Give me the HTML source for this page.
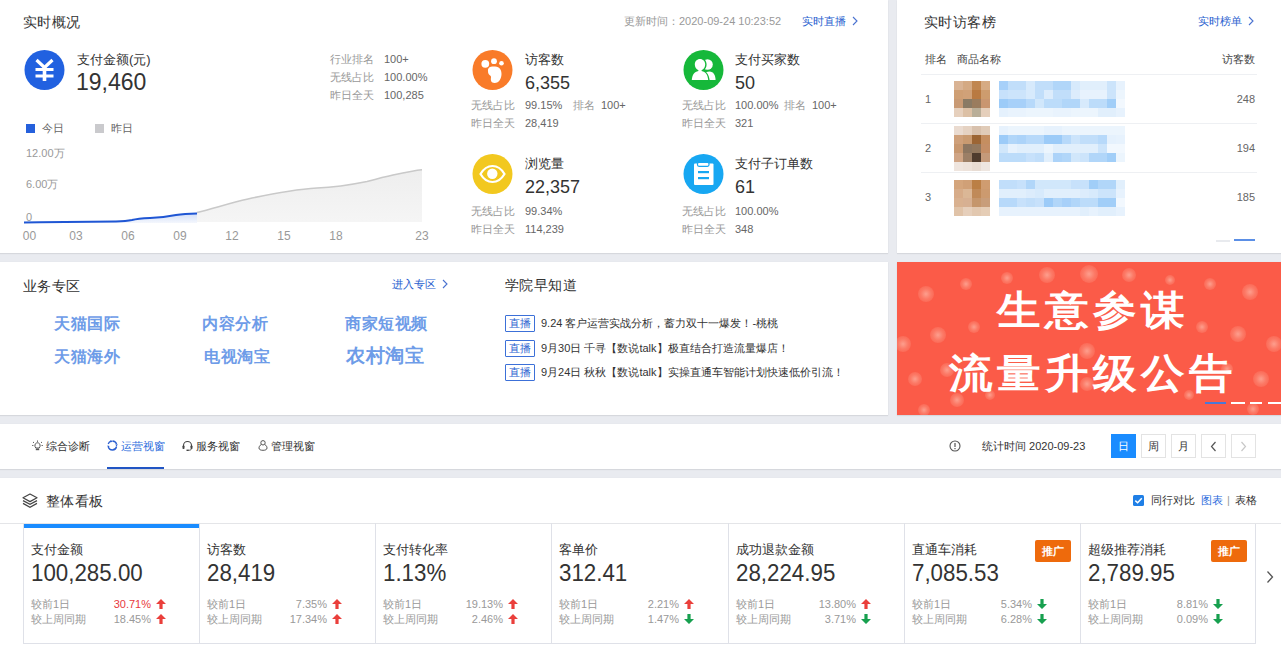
<!DOCTYPE html>
<html><head><meta charset="utf-8">
<style>
*{margin:0;padding:0;box-sizing:border-box}
html,body{width:1281px;height:652px;overflow:hidden;background:#e9ebf0;font-family:"Liberation Sans",sans-serif;color:#333}
.p{position:absolute;background:#fff;box-shadow:0 1px 1px rgba(0,0,0,0.07),0 0 1px rgba(0,0,0,0.06)}
.a{position:absolute;white-space:nowrap}
.t14{font-size:14px;line-height:16px;color:#333;letter-spacing:0.4px}
.g{color:#999}
.s12{font-size:12px;line-height:14px}
.s11{font-size:11px;line-height:14px}
.blue{color:#2a5fcf}
.circle{position:absolute;width:41px;height:41px;border-radius:50%}
.biz{font-size:16px;line-height:18px;font-weight:bold;color:#6e9ce8;letter-spacing:0.5px}
.tag{width:30px;height:17px;border:1px solid #3c70d8;color:#2b62d0;font-size:11px;line-height:14px;text-align:center;border-radius:1px}
.btn{width:25px;height:24px;border:1px solid #e3e3e3;font-size:11px;line-height:22px;text-align:center;color:#333;background:#fff}
.card{position:absolute;top:45px;width:177px;height:121px;border:1px solid #e3e5ea}
.badge{width:36px;height:22px;background:#ee6a0c;color:#fff;font-size:11px;line-height:22px;text-align:center;border-radius:2px;font-weight:bold}
.num{font-size:24px;line-height:26px;color:#333;transform:scaleX(0.93);transform-origin:0 0}
</style></head><body>

<!-- Panel 1 -->
<div class="p" style="left:0;top:0;width:888px;height:253px">
  <div class="a t14" style="left:23px;top:14px">实时概况</div>
  <svg class="a" style="left:24px;top:50px" width="41" height="41" viewBox="0 0 41 41">
<circle cx="20.5" cy="20" r="20" fill="#2161e0"/>
<path d="M12.5,10 L20.5,17.5 L28.5,10" fill="none" stroke="#fff" stroke-width="3.2"/>
<rect x="11.5" y="18" width="18" height="3" fill="#fff"/>
<rect x="11.5" y="24.5" width="18" height="3" fill="#fff"/>
<rect x="18.7" y="16" width="3.6" height="15" fill="#fff"/>
</svg>
  <div class="a" style="left:77px;top:52px;font-size:13px;line-height:16px">支付金额(元)</div>
  <div class="a" style="left:76px;top:69px;font-size:23px;line-height:26px">19,460</div>
  <div class="a s11 g" style="left:330px;top:52px">行业排名</div><div class="a s11" style="left:384px;top:52px;color:#666">100+</div>
  <div class="a s11 g" style="left:330px;top:70px">无线占比</div><div class="a s11" style="left:384px;top:70px;color:#666">100.00%</div>
  <div class="a s11 g" style="left:330px;top:88px">昨日全天</div><div class="a s11" style="left:384px;top:88px;color:#666">100,285</div>

  <div class="a" style="left:26px;top:124px;width:9px;height:9px;background:#2560dc"></div>
  <div class="a s11" style="left:42px;top:121px;color:#666">今日</div>
  <div class="a" style="left:95px;top:124px;width:9px;height:9px;background:#cacacd"></div>
  <div class="a s11" style="left:111px;top:121px;color:#666">昨日</div>

  <div class="a s11 g" style="left:26px;top:146px">12.00万</div>
  <div class="a s11 g" style="left:26px;top:177px">6.00万</div>
  <div class="a s11 g" style="left:26px;top:210px">0</div>
  <div class="a g" style="left:14.5px;width:30px;text-align:center;top:229px;font-size:12px;line-height:14px">00</div>
  <div class="a g" style="left:61px;width:30px;text-align:center;top:229px;font-size:12px;line-height:14px">03</div>
  <div class="a g" style="left:113px;width:30px;text-align:center;top:229px;font-size:12px;line-height:14px">06</div>
  <div class="a g" style="left:165px;width:30px;text-align:center;top:229px;font-size:12px;line-height:14px">09</div>
  <div class="a g" style="left:217px;width:30px;text-align:center;top:229px;font-size:12px;line-height:14px">12</div>
  <div class="a g" style="left:269px;width:30px;text-align:center;top:229px;font-size:12px;line-height:14px">15</div>
  <div class="a g" style="left:321px;width:30px;text-align:center;top:229px;font-size:12px;line-height:14px">18</div>
  <div class="a g" style="left:407px;width:30px;text-align:center;top:229px;font-size:12px;line-height:14px">23</div>
  <svg class="a" style="left:0;top:0" width="440" height="253">
    <defs>
      <linearGradient id="gf" x1="0" y1="0" x2="0" y2="1"><stop offset="0" stop-color="#eeeeee"/><stop offset="1" stop-color="#f5f5f5"/></linearGradient>
      <linearGradient id="bf" x1="0" y1="0" x2="0" y2="1"><stop offset="0" stop-color="#d2def8"/><stop offset="1" stop-color="#f4f7fd"/></linearGradient>
    </defs>
    <path d="M24,222 C60,221.5 100,221 116,220.5 C125,220.2 130,219 138,218.3 C150,217.5 160,217.5 168,216 C176,214.5 182,213.5 197,212.5 C215,208 230,203 248,199 C275,193 300,189 317,188 C330,187.5 345,186 367,181.5 C380,178 386,176.5 393,175 C405,172.5 415,170.5 422,169.8 L422,222 Z" fill="url(#gf)"/>
    <path d="M197,212.5 C215,208 230,203 248,199 C275,193 300,189 317,188 C330,187.5 345,186 367,181.5 C380,178 386,176.5 393,175 C405,172.5 415,170.5 422,169.8" fill="none" stroke="#c9c9c9" stroke-width="1.6"/>
    <path d="M24,222.5 C60,222 100,221.6 116,221.4 C124,221.2 128,220.8 132,220 C136,219 140,218.5 150,218 C160,217.5 168,216.5 176,215 C182,213.8 188,213.4 197,213.4 L197,223 L24,223 Z" fill="url(#bf)"/>
    <path d="M24,222.5 C60,222 100,221.6 116,221.4 C124,221.2 128,220.8 132,220 C136,219 140,218.5 150,218 C160,217.5 168,216.5 176,215 C182,213.8 188,213.4 197,213.4" fill="none" stroke="#1f56d4" stroke-width="2"/>
  </svg>

  <div class="a s11 g" style="left:624px;top:14px">更新时间：2020-09-24 10:23:52</div>
  <div class="a s11 blue" style="left:802px;top:14px">实时直播</div><svg class="a" style="left:852px;top:16px" width="6" height="10"><path d="M1,1 L5,5 L1,9" fill="none" stroke="#4a72d0" stroke-width="1.1"/></svg>

  <svg class="a" style="left:472px;top:50px" width="41" height="41" viewBox="0 0 41 41">
<circle cx="20.5" cy="20" r="20" fill="#f97b29"/>
<circle cx="13.3" cy="13.8" r="3.9" fill="#fff"/>
<circle cx="22" cy="11.2" r="2.9" fill="#fff"/>
<circle cx="29.5" cy="13.3" r="2.3" fill="#fff"/>
<path d="M16,21 C15.5,17 19,16 23,16.5 C28,17 29.5,20 29.5,24 C29.5,28 27.5,33 22.5,33 C19,33 18.5,30 19,27.5 C19.3,26 18,25.5 17,24.5 C16.3,23.6 16,22.5 16,21 Z" fill="#fff"/>
</svg>
  <div class="a" style="left:525px;top:52px;font-size:13px;line-height:16px">访客数</div>
  <div class="a" style="left:525px;top:73px;font-size:18px;line-height:20px">6,355</div>
  <div class="a s11 g" style="left:471px;top:98px">无线占比</div><div class="a s11" style="left:525px;top:98px;color:#666">99.15%</div>
  <div class="a s11 g" style="left:573px;top:98px">排名</div><div class="a s11" style="left:601px;top:98px;color:#666">100+</div>
  <div class="a s11 g" style="left:471px;top:116px">昨日全天</div><div class="a s11" style="left:525px;top:116px;color:#666">28,419</div>

  <svg class="a" style="left:683px;top:50px" width="41" height="41" viewBox="0 0 41 41">
<circle cx="20.5" cy="20" r="20" fill="#16b83a"/>
<circle cx="24.5" cy="14.5" r="5.3" fill="#fff"/>
<path d="M19,30 C19.5,24.5 22,21.5 26.5,21.5 C30.5,21.5 32.3,25 32.6,30 Z" fill="#fff"/>
<path d="M17,7.6 C20.8,7.6 23.6,10.6 23.6,14.4 C23.6,17.2 22.2,19.4 20.2,20.6 C24,21.8 26.2,25 26.8,31.4 L7.2,31.4 C7.8,25 10,21.8 13.8,20.6 C11.8,19.4 10.4,17.2 10.4,14.4 C10.4,10.6 13.2,7.6 17,7.6 Z" fill="#16b83a"/>
<path d="M17,9 C20,9 22.2,11.4 22.2,14.4 C22.2,17 20.8,19 18.6,20.2 L18.6,21 C22.6,21.8 24.8,24.8 25.2,30 L8.8,30 C9.2,24.8 11.4,21.8 15.4,21 L15.4,20.2 C13.2,19 11.8,17 11.8,14.4 C11.8,11.4 14,9 17,9 Z" fill="#fff"/>
</svg>
  <div class="a" style="left:735px;top:52px;font-size:13px;line-height:16px">支付买家数</div>
  <div class="a" style="left:735px;top:73px;font-size:18px;line-height:20px">50</div>
  <div class="a s11 g" style="left:682px;top:98px">无线占比</div><div class="a s11" style="left:735px;top:98px;color:#666">100.00%</div>
  <div class="a s11 g" style="left:784px;top:98px">排名</div><div class="a s11" style="left:812px;top:98px;color:#666">100+</div>
  <div class="a s11 g" style="left:682px;top:116px">昨日全天</div><div class="a s11" style="left:735px;top:116px;color:#666">321</div>

  <svg class="a" style="left:472px;top:154px" width="41" height="41" viewBox="0 0 41 41">
<circle cx="20.5" cy="20" r="20" fill="#f2c81f"/>
<path d="M8.5,20 C12,14 16,12 20.5,12 C25,12 29,14 32.5,20 C29,26 25,28 20.5,28 C16,28 12,26 8.5,20 Z" fill="none" stroke="#fff" stroke-width="2.2"/>
<circle cx="20.3" cy="19.8" r="5.2" fill="#fff"/>
</svg>
  <div class="a" style="left:525px;top:156px;font-size:13px;line-height:16px">浏览量</div>
  <div class="a" style="left:525px;top:177px;font-size:18px;line-height:20px">22,357</div>
  <div class="a s11 g" style="left:471px;top:204px">无线占比</div><div class="a s11" style="left:525px;top:204px;color:#666">99.34%</div>
  <div class="a s11 g" style="left:471px;top:222px">昨日全天</div><div class="a s11" style="left:525px;top:222px;color:#666">114,239</div>

  <svg class="a" style="left:683px;top:154px" width="41" height="41" viewBox="0 0 41 41">
<circle cx="20.5" cy="20" r="20" fill="#17a7f2"/>
<rect x="11" y="9.5" width="19.5" height="21.5" rx="1" fill="#fff"/>
<rect x="14.5" y="8.3" width="11.5" height="4" rx="1.5" fill="#fff" stroke="#17a7f2" stroke-width="1.2"/>
<rect x="15" y="17" width="11" height="2.2" fill="#17a7f2"/>
<rect x="15" y="23" width="11" height="2.2" fill="#17a7f2"/>
</svg>
  <div class="a" style="left:735px;top:156px;font-size:13px;line-height:16px">支付子订单数</div>
  <div class="a" style="left:735px;top:177px;font-size:18px;line-height:20px">61</div>
  <div class="a s11 g" style="left:682px;top:204px">无线占比</div><div class="a s11" style="left:735px;top:204px;color:#666">100.00%</div>
  <div class="a s11 g" style="left:682px;top:222px">昨日全天</div><div class="a s11" style="left:735px;top:222px;color:#666">348</div>
</div>

<!-- Panel 2 -->
<div class="p" style="left:897px;top:0;width:384px;height:253px">
  <div class="a t14" style="left:27px;top:14px">实时访客榜</div>
  <div class="a s11 blue" style="left:301px;top:14px">实时榜单</div><svg class="a" style="left:351px;top:16px" width="6" height="10"><path d="M1,1 L5,5 L1,9" fill="none" stroke="#4a72d0" stroke-width="1.1"/></svg>
  <div class="a s11" style="left:28px;top:52px;color:#444">排名</div>
  <div class="a s11" style="left:60px;top:52px;color:#444">商品名称</div>
  <div class="a s11" style="right:26px;top:52px;color:#444">访客数</div>
  <div class="a" style="left:24px;top:74px;width:336px;height:1px;background:#eef0f3"></div>
  <div class="a" style="left:24px;top:123px;width:336px;height:1px;background:#eef0f3"></div>
  <div class="a" style="left:24px;top:172px;width:336px;height:1px;background:#eef0f3"></div>
  <div class="a s11" style="left:28px;top:92px;color:#666">1</div>
  <div class="a s11" style="left:28px;top:141px;color:#666">2</div>
  <div class="a s11" style="left:28px;top:190px;color:#666">3</div>
  <div class="a s11" style="right:26px;top:92px;color:#666">248</div>
  <div class="a s11" style="right:26px;top:141px;color:#666">194</div>
  <div class="a s11" style="right:26px;top:190px;color:#666">185</div>
  <div class="a" style="left:319px;top:240px;width:14px;height:2px;background:#e8eaee"></div>
  <div class="a" style="left:337px;top:239px;width:21px;height:2px;background:#5b8fe6"></div>
</div>
<svg class="a" style="left:0;top:0" width="1281" height="253"><rect x="954" y="81" width="9" height="9" fill="#d9b394"/>
<rect x="963" y="81" width="9" height="9" fill="#d4a983"/>
<rect x="972" y="81" width="9" height="9" fill="#c08650"/>
<rect x="981" y="81" width="9" height="9" fill="#d6ab84"/>
<rect x="954" y="90" width="9" height="9" fill="#cf9f74"/>
<rect x="963" y="90" width="9" height="9" fill="#d0a178"/>
<rect x="972" y="90" width="9" height="9" fill="#b97a42"/>
<rect x="981" y="90" width="9" height="9" fill="#cd9c6e"/>
<rect x="954" y="99" width="9" height="9" fill="#c99a74"/>
<rect x="963" y="99" width="9" height="9" fill="#8a7a64"/>
<rect x="972" y="99" width="9" height="9" fill="#9a7c5e"/>
<rect x="981" y="99" width="9" height="9" fill="#c99670"/>
<rect x="954" y="108" width="9" height="9" fill="#e6d0bd"/>
<rect x="963" y="108" width="9" height="9" fill="#dcc0a5"/>
<rect x="972" y="108" width="9" height="9" fill="#b9ae98"/>
<rect x="981" y="108" width="9" height="9" fill="#e5cfbb"/>
<rect x="954" y="126" width="9" height="9" fill="#eadbd0"/>
<rect x="963" y="126" width="9" height="9" fill="#e5d2c2"/>
<rect x="972" y="126" width="9" height="9" fill="#d8c1ad"/>
<rect x="981" y="126" width="9" height="9" fill="#e0cbb8"/>
<rect x="954" y="135" width="9" height="9" fill="#cfa07a"/>
<rect x="963" y="135" width="9" height="9" fill="#c99a70"/>
<rect x="972" y="135" width="9" height="9" fill="#9c6534"/>
<rect x="981" y="135" width="9" height="9" fill="#c58e60"/>
<rect x="954" y="144" width="9" height="9" fill="#c89870"/>
<rect x="963" y="144" width="9" height="9" fill="#8d7660"/>
<rect x="972" y="144" width="9" height="9" fill="#93785e"/>
<rect x="981" y="144" width="9" height="9" fill="#c48e66"/>
<rect x="954" y="153" width="9" height="9" fill="#d0a585"/>
<rect x="963" y="153" width="9" height="9" fill="#9c7f66"/>
<rect x="972" y="153" width="9" height="9" fill="#4f3c2e"/>
<rect x="981" y="153" width="9" height="9" fill="#c49a7a"/>
<rect x="954" y="162" width="9" height="9" fill="#efe5de"/>
<rect x="963" y="162" width="9" height="9" fill="#ede2da"/>
<rect x="972" y="162" width="9" height="9" fill="#e8dcd3"/>
<rect x="981" y="162" width="9" height="9" fill="#eee6e0"/>
<rect x="954" y="180" width="9" height="9" fill="#d4a57c"/>
<rect x="963" y="180" width="9" height="9" fill="#d0a077"/>
<rect x="972" y="180" width="9" height="9" fill="#bb7f45"/>
<rect x="981" y="180" width="9" height="9" fill="#cf9c70"/>
<rect x="954" y="189" width="9" height="9" fill="#d7ac89"/>
<rect x="963" y="189" width="9" height="9" fill="#dbb796"/>
<rect x="972" y="189" width="9" height="9" fill="#c08a59"/>
<rect x="981" y="189" width="9" height="9" fill="#cc9a6f"/>
<rect x="954" y="198" width="9" height="9" fill="#d9b190"/>
<rect x="963" y="198" width="9" height="9" fill="#d7b092"/>
<rect x="972" y="198" width="9" height="9" fill="#c5966c"/>
<rect x="981" y="198" width="9" height="9" fill="#c89d7a"/>
<rect x="954" y="207" width="9" height="9" fill="#e0c3a8"/>
<rect x="963" y="207" width="9" height="9" fill="#e6cfbb"/>
<rect x="972" y="207" width="9" height="9" fill="#e2c8b0"/>
<rect x="981" y="207" width="9" height="9" fill="#e5cdb6"/>
<rect x="999" y="81" width="9" height="9" fill="#a7d0f9"/>
<rect x="1008" y="81" width="9" height="9" fill="#c1defa"/>
<rect x="1017" y="81" width="9" height="9" fill="#c1defa"/>
<rect x="1026" y="81" width="9" height="9" fill="#d7eafc"/>
<rect x="1035" y="81" width="9" height="9" fill="#c1defa"/>
<rect x="1044" y="81" width="9" height="9" fill="#c1defa"/>
<rect x="1053" y="81" width="9" height="9" fill="#b1d6f9"/>
<rect x="1062" y="81" width="9" height="9" fill="#b1d6f9"/>
<rect x="1071" y="81" width="9" height="9" fill="#d7eafc"/>
<rect x="1080" y="81" width="9" height="9" fill="#e1effc"/>
<rect x="1089" y="81" width="9" height="9" fill="#e1effc"/>
<rect x="1098" y="81" width="9" height="9" fill="#e1effc"/>
<rect x="1107" y="81" width="9" height="9" fill="#cce4fb"/>
<rect x="1116" y="81" width="9" height="9" fill="#e7f2fd"/>
<rect x="999" y="90" width="9" height="9" fill="#c7e1fb"/>
<rect x="1008" y="90" width="9" height="9" fill="#cce4fb"/>
<rect x="1017" y="90" width="9" height="9" fill="#cce4fb"/>
<rect x="1026" y="90" width="9" height="9" fill="#d7eafc"/>
<rect x="1035" y="90" width="9" height="9" fill="#c1defa"/>
<rect x="1044" y="90" width="9" height="9" fill="#dcecfc"/>
<rect x="1053" y="90" width="9" height="9" fill="#c1defa"/>
<rect x="1062" y="90" width="9" height="9" fill="#c1defa"/>
<rect x="1071" y="90" width="9" height="9" fill="#dcecfc"/>
<rect x="1080" y="90" width="9" height="9" fill="#e7f2fd"/>
<rect x="1089" y="90" width="9" height="9" fill="#e7f2fd"/>
<rect x="1098" y="90" width="9" height="9" fill="#e7f2fd"/>
<rect x="1107" y="90" width="9" height="9" fill="#cce4fb"/>
<rect x="1116" y="90" width="9" height="9" fill="#ecf5fd"/>
<rect x="999" y="99" width="9" height="9" fill="#9ccbf8"/>
<rect x="1008" y="99" width="9" height="9" fill="#a7d0f9"/>
<rect x="1017" y="99" width="9" height="9" fill="#a7d0f9"/>
<rect x="1026" y="99" width="9" height="9" fill="#b7d9fa"/>
<rect x="1035" y="99" width="9" height="9" fill="#d1e7fb"/>
<rect x="1044" y="99" width="9" height="9" fill="#bcdcfa"/>
<rect x="1053" y="99" width="9" height="9" fill="#bcdcfa"/>
<rect x="1062" y="99" width="9" height="9" fill="#b1d6f9"/>
<rect x="1071" y="99" width="9" height="9" fill="#b1d6f9"/>
<rect x="1080" y="99" width="9" height="9" fill="#d7eafc"/>
<rect x="1089" y="99" width="9" height="9" fill="#bcdcfa"/>
<rect x="1098" y="99" width="9" height="9" fill="#bcdcfa"/>
<rect x="1107" y="99" width="9" height="9" fill="#a1cef8"/>
<rect x="1116" y="99" width="9" height="9" fill="#f2f8fe"/>
<rect x="999" y="108" width="9" height="9" fill="#e5f1fd"/>
<rect x="1008" y="108" width="9" height="9" fill="#e9f3fd"/>
<rect x="1017" y="108" width="9" height="9" fill="#e9f3fd"/>
<rect x="1026" y="108" width="9" height="9" fill="#ecf5fd"/>
<rect x="1035" y="108" width="9" height="9" fill="#ecf5fd"/>
<rect x="1044" y="108" width="9" height="9" fill="#ecf5fd"/>
<rect x="1053" y="108" width="9" height="9" fill="#e9f3fd"/>
<rect x="1062" y="108" width="9" height="9" fill="#e9f3fd"/>
<rect x="1071" y="108" width="9" height="9" fill="#ecf5fd"/>
<rect x="1080" y="108" width="9" height="9" fill="#ecf5fd"/>
<rect x="1089" y="108" width="9" height="9" fill="#ecf5fd"/>
<rect x="1098" y="108" width="9" height="9" fill="#e1effc"/>
<rect x="1107" y="108" width="9" height="9" fill="#e1effc"/>
<rect x="1116" y="108" width="9" height="9" fill="#e7f2fd"/>
<rect x="999" y="126" width="9" height="9" fill="#e7f2fd"/>
<rect x="1008" y="126" width="9" height="9" fill="#ecf5fd"/>
<rect x="1017" y="126" width="9" height="9" fill="#ecf5fd"/>
<rect x="1026" y="126" width="9" height="9" fill="#ecf5fd"/>
<rect x="1035" y="126" width="9" height="9" fill="#ecf5fd"/>
<rect x="1044" y="126" width="9" height="9" fill="#e7f2fd"/>
<rect x="1053" y="126" width="9" height="9" fill="#e7f2fd"/>
<rect x="1062" y="126" width="9" height="9" fill="#ecf5fd"/>
<rect x="1071" y="126" width="9" height="9" fill="#ecf5fd"/>
<rect x="1080" y="126" width="9" height="9" fill="#ecf5fd"/>
<rect x="1089" y="126" width="9" height="9" fill="#ecf5fd"/>
<rect x="1098" y="126" width="9" height="9" fill="#ecf5fd"/>
<rect x="1107" y="126" width="9" height="9" fill="#ecf5fd"/>
<rect x="1116" y="126" width="9" height="9" fill="#ecf5fd"/>
<rect x="999" y="135" width="9" height="9" fill="#9ccbf8"/>
<rect x="1008" y="135" width="9" height="9" fill="#b1d6f9"/>
<rect x="1017" y="135" width="9" height="9" fill="#acd3f9"/>
<rect x="1026" y="135" width="9" height="9" fill="#b7d9fa"/>
<rect x="1035" y="135" width="9" height="9" fill="#b7d9fa"/>
<rect x="1044" y="135" width="9" height="9" fill="#9ccbf8"/>
<rect x="1053" y="135" width="9" height="9" fill="#9ccbf8"/>
<rect x="1062" y="135" width="9" height="9" fill="#b7d9fa"/>
<rect x="1071" y="135" width="9" height="9" fill="#cce4fb"/>
<rect x="1080" y="135" width="9" height="9" fill="#c1defa"/>
<rect x="1089" y="135" width="9" height="9" fill="#c1defa"/>
<rect x="1098" y="135" width="9" height="9" fill="#b7d9fa"/>
<rect x="1107" y="135" width="9" height="9" fill="#e5f1fd"/>
<rect x="1116" y="135" width="9" height="9" fill="#e7f2fd"/>
<rect x="999" y="144" width="9" height="9" fill="#d1e7fb"/>
<rect x="1008" y="144" width="9" height="9" fill="#e7f2fd"/>
<rect x="1017" y="144" width="9" height="9" fill="#e1effc"/>
<rect x="1026" y="144" width="9" height="9" fill="#e1effc"/>
<rect x="1035" y="144" width="9" height="9" fill="#e1effc"/>
<rect x="1044" y="144" width="9" height="9" fill="#ecf5fd"/>
<rect x="1053" y="144" width="9" height="9" fill="#e1effc"/>
<rect x="1062" y="144" width="9" height="9" fill="#e1effc"/>
<rect x="1071" y="144" width="9" height="9" fill="#e1effc"/>
<rect x="1080" y="144" width="9" height="9" fill="#e1effc"/>
<rect x="1089" y="144" width="9" height="9" fill="#e1effc"/>
<rect x="1098" y="144" width="9" height="9" fill="#cce4fb"/>
<rect x="1107" y="144" width="9" height="9" fill="#f2f8fe"/>
<rect x="1116" y="144" width="9" height="9" fill="#f2f8fe"/>
<rect x="999" y="153" width="9" height="9" fill="#bcdcfa"/>
<rect x="1008" y="153" width="9" height="9" fill="#bcdcfa"/>
<rect x="1017" y="153" width="9" height="9" fill="#bcdcfa"/>
<rect x="1026" y="153" width="9" height="9" fill="#c7e1fb"/>
<rect x="1035" y="153" width="9" height="9" fill="#c1defa"/>
<rect x="1044" y="153" width="9" height="9" fill="#e1effc"/>
<rect x="1053" y="153" width="9" height="9" fill="#acd3f9"/>
<rect x="1062" y="153" width="9" height="9" fill="#b1d6f9"/>
<rect x="1071" y="153" width="9" height="9" fill="#d1e7fb"/>
<rect x="1080" y="153" width="9" height="9" fill="#cce4fb"/>
<rect x="1089" y="153" width="9" height="9" fill="#b1d6f9"/>
<rect x="1098" y="153" width="9" height="9" fill="#b1d6f9"/>
<rect x="1107" y="153" width="9" height="9" fill="#a1cef8"/>
<rect x="1116" y="153" width="9" height="9" fill="#ecf5fd"/>
<rect x="999" y="180" width="9" height="9" fill="#c1defa"/>
<rect x="1008" y="180" width="9" height="9" fill="#c1defa"/>
<rect x="1017" y="180" width="9" height="9" fill="#c7e1fb"/>
<rect x="1026" y="180" width="9" height="9" fill="#b1d6f9"/>
<rect x="1035" y="180" width="9" height="9" fill="#d1e7fb"/>
<rect x="1044" y="180" width="9" height="9" fill="#d1e7fb"/>
<rect x="1053" y="180" width="9" height="9" fill="#d1e7fb"/>
<rect x="1062" y="180" width="9" height="9" fill="#d1e7fb"/>
<rect x="1071" y="180" width="9" height="9" fill="#c7e1fb"/>
<rect x="1080" y="180" width="9" height="9" fill="#c7e1fb"/>
<rect x="1089" y="180" width="9" height="9" fill="#a1cef8"/>
<rect x="1098" y="180" width="9" height="9" fill="#b1d6f9"/>
<rect x="1107" y="180" width="9" height="9" fill="#b1d6f9"/>
<rect x="1116" y="180" width="9" height="9" fill="#e1effc"/>
<rect x="999" y="189" width="9" height="9" fill="#e1effc"/>
<rect x="1008" y="189" width="9" height="9" fill="#e1effc"/>
<rect x="1017" y="189" width="9" height="9" fill="#e1effc"/>
<rect x="1026" y="189" width="9" height="9" fill="#dcecfc"/>
<rect x="1035" y="189" width="9" height="9" fill="#d7eafc"/>
<rect x="1044" y="189" width="9" height="9" fill="#e1effc"/>
<rect x="1053" y="189" width="9" height="9" fill="#e1effc"/>
<rect x="1062" y="189" width="9" height="9" fill="#e1effc"/>
<rect x="1071" y="189" width="9" height="9" fill="#e1effc"/>
<rect x="1080" y="189" width="9" height="9" fill="#dcecfc"/>
<rect x="1089" y="189" width="9" height="9" fill="#d7eafc"/>
<rect x="1098" y="189" width="9" height="9" fill="#cce4fb"/>
<rect x="1107" y="189" width="9" height="9" fill="#cce4fb"/>
<rect x="1116" y="189" width="9" height="9" fill="#e7f2fd"/>
<rect x="999" y="198" width="9" height="9" fill="#b7d9fa"/>
<rect x="1008" y="198" width="9" height="9" fill="#b7d9fa"/>
<rect x="1017" y="198" width="9" height="9" fill="#c7e1fb"/>
<rect x="1026" y="198" width="9" height="9" fill="#c1defa"/>
<rect x="1035" y="198" width="9" height="9" fill="#c7e1fb"/>
<rect x="1044" y="198" width="9" height="9" fill="#9ccbf8"/>
<rect x="1053" y="198" width="9" height="9" fill="#b1d6f9"/>
<rect x="1062" y="198" width="9" height="9" fill="#a7d0f9"/>
<rect x="1071" y="198" width="9" height="9" fill="#b1d6f9"/>
<rect x="1080" y="198" width="9" height="9" fill="#bcdcfa"/>
<rect x="1089" y="198" width="9" height="9" fill="#bcdcfa"/>
<rect x="1098" y="198" width="9" height="9" fill="#a1cef8"/>
<rect x="1107" y="198" width="9" height="9" fill="#a1cef8"/>
<rect x="1116" y="198" width="9" height="9" fill="#f2f8fe"/>
<rect x="999" y="207" width="9" height="9" fill="#e7f2fd"/>
<rect x="1008" y="207" width="9" height="9" fill="#e7f2fd"/>
<rect x="1017" y="207" width="9" height="9" fill="#e7f2fd"/>
<rect x="1026" y="207" width="9" height="9" fill="#e7f2fd"/>
<rect x="1035" y="207" width="9" height="9" fill="#e7f2fd"/>
<rect x="1044" y="207" width="9" height="9" fill="#e7f2fd"/>
<rect x="1053" y="207" width="9" height="9" fill="#e7f2fd"/>
<rect x="1062" y="207" width="9" height="9" fill="#e7f2fd"/>
<rect x="1071" y="207" width="9" height="9" fill="#e7f2fd"/>
<rect x="1080" y="207" width="9" height="9" fill="#e1effc"/>
<rect x="1089" y="207" width="9" height="9" fill="#e7f2fd"/>
<rect x="1098" y="207" width="9" height="9" fill="#e1effc"/>
<rect x="1107" y="207" width="9" height="9" fill="#e1effc"/>
<rect x="1116" y="207" width="9" height="9" fill="#e7f2fd"/></svg>

<!-- Panel 3 -->
<div class="p" style="left:0;top:262px;width:888px;height:153px">
  <div class="a t14" style="left:23px;top:16px">业务专区</div>
  <div class="a s11 blue" style="left:392px;top:15px">进入专区</div><svg class="a" style="left:442px;top:17px" width="6" height="10"><path d="M1,1 L5,5 L1,9" fill="none" stroke="#4a72d0" stroke-width="1.1"/></svg>
  <div class="a biz" style="left:54px;top:53px">天猫国际</div>
  <div class="a biz" style="left:54px;top:86px">天猫海外</div>
  <div class="a biz" style="left:202px;top:53px">内容分析</div>
  <div class="a biz" style="left:204px;top:86px">电视淘宝</div>
  <div class="a biz" style="left:345px;top:53px">商家短视频</div>
  <div class="a biz" style="left:346px;top:84px;font-size:19px;line-height:20px">农村淘宝</div>
  <div class="a t14" style="left:505px;top:15px">学院早知道</div>
  <div class="a tag" style="left:505px;top:53px">直播</div>
  <div class="a tag" style="left:505px;top:78px">直播</div>
  <div class="a tag" style="left:505px;top:102px">直播</div>
  <div class="a s11" style="left:541px;top:54px;color:#333">9.24 客户运营实战分析，蓄力双十一爆发！-桃桃</div>
  <div class="a s11" style="left:541px;top:79px;color:#333">9月30日 千寻【数说talk】极直结合打造流量爆店！</div>
  <div class="a s11" style="left:541px;top:103px;color:#333">9月24日 秋秋【数说talk】实操直通车智能计划快速低价引流！</div>
</div>

<!-- Banner -->
<div class="p" style="left:897px;top:262px;width:384px;height:153px;background:#fb5b48;overflow:hidden">
<div class="a" style="left:21px;top:24px;width:16px;height:16px;border-radius:50%;background:radial-gradient(circle,rgba(255,225,210,0.5) 0,rgba(255,210,190,0.25) 45%,rgba(255,200,180,0) 100%)"></div><div class="a" style="left:63px;top:16px;width:12px;height:12px;border-radius:50%;background:radial-gradient(circle,rgba(255,225,210,0.5) 0,rgba(255,210,190,0.25) 45%,rgba(255,200,180,0) 100%)"></div><div class="a" style="left:104px;top:10px;width:12px;height:12px;border-radius:50%;background:radial-gradient(circle,rgba(255,225,210,0.5) 0,rgba(255,210,190,0.25) 45%,rgba(255,200,180,0) 100%)"></div><div class="a" style="left:142px;top:5px;width:16px;height:16px;border-radius:50%;background:radial-gradient(circle,rgba(255,225,210,0.5) 0,rgba(255,210,190,0.25) 45%,rgba(255,200,180,0) 100%)"></div><div class="a" style="left:183px;top:3px;width:18px;height:18px;border-radius:50%;background:radial-gradient(circle,rgba(255,225,210,0.5) 0,rgba(255,210,190,0.25) 45%,rgba(255,200,180,0) 100%)"></div><div class="a" style="left:71px;top:59px;width:12px;height:12px;border-radius:50%;background:radial-gradient(circle,rgba(255,225,210,0.5) 0,rgba(255,210,190,0.25) 45%,rgba(255,200,180,0) 100%)"></div><div class="a" style="left:33px;top:65px;width:16px;height:16px;border-radius:50%;background:radial-gradient(circle,rgba(255,225,210,0.5) 0,rgba(255,210,190,0.25) 45%,rgba(255,200,180,0) 100%)"></div><div class="a" style="left:-2px;top:74px;width:16px;height:16px;border-radius:50%;background:radial-gradient(circle,rgba(255,225,210,0.5) 0,rgba(255,210,190,0.25) 45%,rgba(255,200,180,0) 100%)"></div><div class="a" style="left:43px;top:101px;width:14px;height:14px;border-radius:50%;background:radial-gradient(circle,rgba(255,225,210,0.5) 0,rgba(255,210,190,0.25) 45%,rgba(255,200,180,0) 100%)"></div><div class="a" style="left:11px;top:110px;width:14px;height:14px;border-radius:50%;background:radial-gradient(circle,rgba(255,225,210,0.5) 0,rgba(255,210,190,0.25) 45%,rgba(255,200,180,0) 100%)"></div><div class="a" style="left:53px;top:131px;width:14px;height:14px;border-radius:50%;background:radial-gradient(circle,rgba(255,225,210,0.5) 0,rgba(255,210,190,0.25) 45%,rgba(255,200,180,0) 100%)"></div><div class="a" style="left:21px;top:142px;width:12px;height:12px;border-radius:50%;background:radial-gradient(circle,rgba(255,225,210,0.5) 0,rgba(255,210,190,0.25) 45%,rgba(255,200,180,0) 100%)"></div><div class="a" style="left:88px;top:128px;width:10px;height:10px;border-radius:50%;background:radial-gradient(circle,rgba(255,225,210,0.5) 0,rgba(255,210,190,0.25) 45%,rgba(255,200,180,0) 100%)"></div><div class="a" style="left:182px;top:81px;width:16px;height:16px;border-radius:50%;background:radial-gradient(circle,rgba(255,225,210,0.5) 0,rgba(255,210,190,0.25) 45%,rgba(255,200,180,0) 100%)"></div><div class="a" style="left:183px;top:115px;width:14px;height:14px;border-radius:50%;background:radial-gradient(circle,rgba(255,225,210,0.5) 0,rgba(255,210,190,0.25) 45%,rgba(255,200,180,0) 100%)"></div><div class="a" style="left:225px;top:6px;width:14px;height:14px;border-radius:50%;background:radial-gradient(circle,rgba(255,225,210,0.5) 0,rgba(255,210,190,0.25) 45%,rgba(255,200,180,0) 100%)"></div><div class="a" style="left:268px;top:13px;width:10px;height:10px;border-radius:50%;background:radial-gradient(circle,rgba(255,225,210,0.5) 0,rgba(255,210,190,0.25) 45%,rgba(255,200,180,0) 100%)"></div><div class="a" style="left:307px;top:16px;width:12px;height:12px;border-radius:50%;background:radial-gradient(circle,rgba(255,225,210,0.5) 0,rgba(255,210,190,0.25) 45%,rgba(255,200,180,0) 100%)"></div><div class="a" style="left:345px;top:22px;width:16px;height:16px;border-radius:50%;background:radial-gradient(circle,rgba(255,225,210,0.5) 0,rgba(255,210,190,0.25) 45%,rgba(255,200,180,0) 100%)"></div><div class="a" style="left:299px;top:59px;width:12px;height:12px;border-radius:50%;background:radial-gradient(circle,rgba(255,225,210,0.5) 0,rgba(255,210,190,0.25) 45%,rgba(255,200,180,0) 100%)"></div><div class="a" style="left:333px;top:64px;width:16px;height:16px;border-radius:50%;background:radial-gradient(circle,rgba(255,225,210,0.5) 0,rgba(255,210,190,0.25) 45%,rgba(255,200,180,0) 100%)"></div><div class="a" style="left:369px;top:74px;width:16px;height:16px;border-radius:50%;background:radial-gradient(circle,rgba(255,225,210,0.5) 0,rgba(255,210,190,0.25) 45%,rgba(255,200,180,0) 100%)"></div><div class="a" style="left:356px;top:109px;width:16px;height:16px;border-radius:50%;background:radial-gradient(circle,rgba(255,225,210,0.5) 0,rgba(255,210,190,0.25) 45%,rgba(255,200,180,0) 100%)"></div><div class="a" style="left:324px;top:101px;width:12px;height:12px;border-radius:50%;background:radial-gradient(circle,rgba(255,225,210,0.5) 0,rgba(255,210,190,0.25) 45%,rgba(255,200,180,0) 100%)"></div><div class="a" style="left:287px;top:128px;width:10px;height:10px;border-radius:50%;background:radial-gradient(circle,rgba(255,225,210,0.5) 0,rgba(255,210,190,0.25) 45%,rgba(255,200,180,0) 100%)"></div><div class="a" style="left:350px;top:141px;width:12px;height:12px;border-radius:50%;background:radial-gradient(circle,rgba(255,225,210,0.5) 0,rgba(255,210,190,0.25) 45%,rgba(255,200,180,0) 100%)"></div>
  <div class="a" style="left:100px;top:22px;font-size:44px;line-height:52px;color:#fff;font-weight:bold;letter-spacing:4px;transform:scaleY(0.92)">生意参谋</div>
  <div class="a" style="left:52px;top:85px;font-size:44px;line-height:52px;color:#fff;font-weight:bold;letter-spacing:4px;transform:scaleY(0.92)">流量升级公告</div>
  <div class="a" style="left:308px;top:140px;width:21px;height:2px;background:#4a78d6"></div>
  <div class="a" style="left:334px;top:140px;width:14px;height:2px;background:#fff"></div>
  <div class="a" style="left:353px;top:140px;width:12px;height:2px;background:#fff"></div>
  <div class="a" style="left:371px;top:140px;width:13px;height:2px;background:#fff"></div>
</div>

<!-- Tabs -->
<div class="p" style="left:0;top:424px;width:1281px;height:45px">
  <svg class="a" style="left:32px;top:16px" width="11" height="11" viewBox="0 0 11 11">
<path d="M5.5,0.5 L5.5,1.8 M1,2 L2,2.8 M10,2 L9,2.8 M0.2,5.5 L1.4,5.5 M9.6,5.5 L10.8,5.5" stroke="#555" stroke-width="1"/>
<path d="M3,6.5 C2.5,4 4,2.8 5.5,2.8 C7,2.8 8.5,4 8,6.5 L7.2,8 L3.8,8 Z" fill="none" stroke="#555" stroke-width="1"/>
<rect x="3.8" y="8.6" width="3.4" height="1.6" fill="#555"/>
</svg>
<svg class="a" style="left:107px;top:16px" width="11" height="11" viewBox="0 0 11 11">
<path d="M5.5,1 A4.5,4.5 0 0 1 9.6,4 M9.6,6.5 A4.5,4.5 0 0 1 5.5,10 A4.5,4.5 0 0 1 1.2,6.5 M1.2,4 A4.5,4.5 0 0 1 4,1.2" fill="none" stroke="#2b5fd0" stroke-width="1.3"/>
<path d="M3.5,0 L5.8,1.2 L3.8,2.6 Z M10.8,4.2 L9.6,6.6 L8.3,4.4 Z M1.3,8 L0.3,5.6 L2.6,5.9 Z" fill="#2b5fd0"/>
</svg>
<svg class="a" style="left:182px;top:16px" width="11" height="11" viewBox="0 0 11 11">
<path d="M1.5,7 L1.5,5.5 A4,4 0 0 1 9.5,5.5 L9.5,7" fill="none" stroke="#444" stroke-width="1.1"/>
<rect x="0.5" y="5.5" width="2" height="3.5" rx="0.8" fill="#444"/>
<rect x="8.5" y="5.5" width="2" height="3.5" rx="0.8" fill="#444"/>
<path d="M9.5,9 C9,10 8,10.3 6,10.3" fill="none" stroke="#444" stroke-width="0.9"/>
<rect x="4.5" y="9.6" width="2" height="1.4" fill="#444"/>
</svg>
<svg class="a" style="left:258px;top:16px" width="10" height="11" viewBox="0 0 10 11">
<circle cx="5" cy="2.8" r="2.2" fill="none" stroke="#555" stroke-width="1"/>
<path d="M3.2,4.6 C1.5,5.5 1,7 1,8 C1,9.6 2.5,10.3 5,10.3 C7.5,10.3 9,9.6 9,8 C9,7 8.5,5.5 6.8,4.6" fill="none" stroke="#555" stroke-width="1"/>
</svg>
<div class="a s11" style="left:46px;top:15px;color:#333">综合诊断</div>
  <div class="a s11" style="left:121px;top:15px;color:#2b6bdc">运营视窗</div>
  <div class="a s11" style="left:196px;top:15px;color:#333">服务视窗</div>
  <div class="a s11" style="left:271px;top:15px;color:#333">管理视窗</div>
  <div class="a" style="left:107px;top:43px;width:57px;height:2px;background:#2155c4"></div>
  <svg class="a" style="left:949px;top:16px" width="12" height="12"><circle cx="6" cy="6" r="5" fill="none" stroke="#555" stroke-width="1.1"/><rect x="5.4" y="3" width="1.2" height="4" fill="#555"/><rect x="5.4" y="8" width="1.2" height="1.2" fill="#555"/></svg><div class="a s11" style="left:982px;top:15px;color:#333">统计时间 2020-09-23</div>
  <div class="a btn" style="left:1111px;top:10px;background:#1a8cff;border-color:#1a8cff;color:#fff">日</div>
  <div class="a btn" style="left:1141px;top:10px">周</div>
  <div class="a btn" style="left:1171px;top:10px">月</div>
  <div class="a btn" style="left:1201px;top:10px"></div><svg class="a" style="left:1210px;top:17px" width="7" height="11"><path d="M5.5,1 L1.5,5.5 L5.5,10" fill="none" stroke="#555" stroke-width="1.2"/></svg>
  <div class="a btn" style="left:1231px;top:10px"></div><svg class="a" style="left:1240px;top:17px" width="7" height="11"><path d="M1.5,1 L5.5,5.5 L1.5,10" fill="none" stroke="#c8c8c8" stroke-width="1.2"/></svg>
</div>

<!-- Overall -->
<div class="p" style="left:0;top:478px;width:1281px;height:174px">
  <svg class="a" style="left:22px;top:15px" width="16" height="15" viewBox="0 0 16 15">
<path d="M8,1 L15,4.8 L8,8.6 L1,4.8 Z" fill="none" stroke="#444" stroke-width="1.2" stroke-linejoin="round"/>
<path d="M1,7.6 L8,11.4 L15,7.6" fill="none" stroke="#444" stroke-width="1.2"/>
<path d="M1,10.4 L8,14.2 L15,10.4" fill="none" stroke="#444" stroke-width="1.2"/>
</svg><div class="a t14" style="left:46px;top:15px">整体看板</div>
  <svg class="a" style="left:1133px;top:17px" width="11" height="11"><rect x="0" y="0" width="11" height="11" rx="1.5" fill="#1f7fe6"/><path d="M2.3,5.6 L4.6,7.8 L8.8,3.2" fill="none" stroke="#fff" stroke-width="1.5"/></svg>
  <div class="a s11" style="left:1151px;top:15px;color:#333">同行对比</div>
  <div class="a s11" style="left:1201px;top:15px;color:#2b6bdc">图表</div>
  <div class="a s11" style="left:1227px;top:15px;color:#999">|</div>
  <div class="a s11" style="left:1235px;top:15px;color:#333">表格</div>
  <div class="a" style="left:23px;top:45px;width:1233px;height:121px;border:1px solid #dfe1e8"></div>
  <div class="a" style="left:0;top:45px;width:1281px;height:1px;background:#e4e5e8"></div>
  <div class="a" style="left:199px;top:45px;width:1px;height:121px;background:#dfe1e8"></div>
  <div class="a" style="left:375px;top:45px;width:1px;height:121px;background:#dfe1e8"></div>
  <div class="a" style="left:551px;top:45px;width:1px;height:121px;background:#dfe1e8"></div>
  <div class="a" style="left:728px;top:45px;width:1px;height:121px;background:#dfe1e8"></div>
  <div class="a" style="left:904px;top:45px;width:1px;height:121px;background:#dfe1e8"></div>
  <div class="a" style="left:1080px;top:45px;width:1px;height:121px;background:#dfe1e8"></div>
  <div class="a" style="left:24px;top:46px;width:175px;height:4px;background:#1a8cff"></div>
  <div class="a" style="left:31px;top:64px;font-size:13px;line-height:16px;color:#333">支付金额</div><div class="a num" style="left:31px;top:82px">100,285.00</div><div class="a s11 g" style="left:31px;top:119px">较前1日</div><div class="a s11 g" style="left:31px;top:134px">较上周同期</div><div class="a s11" style="left:23px;width:128px;text-align:right;top:119px;color:#e8393c">30.71%</div><svg class="a" style="left:156px;top:121px" width="10" height="10"><path d="M5,0 L10,5 L6.6,5 L6.6,10 L3.4,10 L3.4,5 L0,5 Z" fill="#ea3f3b"/></svg><div class="a s11" style="left:23px;width:128px;text-align:right;top:134px;color:#999">18.45%</div><svg class="a" style="left:156px;top:136px" width="10" height="10"><path d="M5,0 L10,5 L6.6,5 L6.6,10 L3.4,10 L3.4,5 L0,5 Z" fill="#ea3f3b"/></svg>
  <div class="a" style="left:207px;top:64px;font-size:13px;line-height:16px;color:#333">访客数</div><div class="a num" style="left:207px;top:82px">28,419</div><div class="a s11 g" style="left:207px;top:119px">较前1日</div><div class="a s11 g" style="left:207px;top:134px">较上周同期</div><div class="a s11" style="left:199px;width:128px;text-align:right;top:119px;color:#999">7.35%</div><svg class="a" style="left:332px;top:121px" width="10" height="10"><path d="M5,0 L10,5 L6.6,5 L6.6,10 L3.4,10 L3.4,5 L0,5 Z" fill="#ea3f3b"/></svg><div class="a s11" style="left:199px;width:128px;text-align:right;top:134px;color:#999">17.34%</div><svg class="a" style="left:332px;top:136px" width="10" height="10"><path d="M5,0 L10,5 L6.6,5 L6.6,10 L3.4,10 L3.4,5 L0,5 Z" fill="#ea3f3b"/></svg>
  <div class="a" style="left:383px;top:64px;font-size:13px;line-height:16px;color:#333">支付转化率</div><div class="a num" style="left:383px;top:82px">1.13%</div><div class="a s11 g" style="left:383px;top:119px">较前1日</div><div class="a s11 g" style="left:383px;top:134px">较上周同期</div><div class="a s11" style="left:375px;width:128px;text-align:right;top:119px;color:#999">19.13%</div><svg class="a" style="left:508px;top:121px" width="10" height="10"><path d="M5,0 L10,5 L6.6,5 L6.6,10 L3.4,10 L3.4,5 L0,5 Z" fill="#ea3f3b"/></svg><div class="a s11" style="left:375px;width:128px;text-align:right;top:134px;color:#999">2.46%</div><svg class="a" style="left:508px;top:136px" width="10" height="10"><path d="M5,0 L10,5 L6.6,5 L6.6,10 L3.4,10 L3.4,5 L0,5 Z" fill="#ea3f3b"/></svg>
  <div class="a" style="left:559px;top:64px;font-size:13px;line-height:16px;color:#333">客单价</div><div class="a num" style="left:559px;top:82px">312.41</div><div class="a s11 g" style="left:559px;top:119px">较前1日</div><div class="a s11 g" style="left:559px;top:134px">较上周同期</div><div class="a s11" style="left:551px;width:128px;text-align:right;top:119px;color:#999">2.21%</div><svg class="a" style="left:684px;top:121px" width="10" height="10"><path d="M5,0 L10,5 L6.6,5 L6.6,10 L3.4,10 L3.4,5 L0,5 Z" fill="#ea3f3b"/></svg><div class="a s11" style="left:551px;width:128px;text-align:right;top:134px;color:#999">1.47%</div><svg class="a" style="left:684px;top:136px" width="10" height="10"><path d="M5,10 L10,5 L6.6,5 L6.6,0 L3.4,0 L3.4,5 L0,5 Z" fill="#17a04f"/></svg>
  <div class="a" style="left:736px;top:64px;font-size:13px;line-height:16px;color:#333">成功退款金额</div><div class="a num" style="left:736px;top:82px">28,224.95</div><div class="a s11 g" style="left:736px;top:119px">较前1日</div><div class="a s11 g" style="left:736px;top:134px">较上周同期</div><div class="a s11" style="left:728px;width:128px;text-align:right;top:119px;color:#999">13.80%</div><svg class="a" style="left:861px;top:121px" width="10" height="10"><path d="M5,0 L10,5 L6.6,5 L6.6,10 L3.4,10 L3.4,5 L0,5 Z" fill="#ea3f3b"/></svg><div class="a s11" style="left:728px;width:128px;text-align:right;top:134px;color:#999">3.71%</div><svg class="a" style="left:861px;top:136px" width="10" height="10"><path d="M5,10 L10,5 L6.6,5 L6.6,0 L3.4,0 L3.4,5 L0,5 Z" fill="#17a04f"/></svg>
  <div class="a" style="left:912px;top:64px;font-size:13px;line-height:16px;color:#333">直通车消耗</div><div class="a num" style="left:912px;top:82px">7,085.53</div><div class="a s11 g" style="left:912px;top:119px">较前1日</div><div class="a s11 g" style="left:912px;top:134px">较上周同期</div><div class="a s11" style="left:904px;width:128px;text-align:right;top:119px;color:#999">5.34%</div><svg class="a" style="left:1037px;top:121px" width="10" height="10"><path d="M5,10 L10,5 L6.6,5 L6.6,0 L3.4,0 L3.4,5 L0,5 Z" fill="#17a04f"/></svg><div class="a s11" style="left:904px;width:128px;text-align:right;top:134px;color:#999">6.28%</div><svg class="a" style="left:1037px;top:136px" width="10" height="10"><path d="M5,10 L10,5 L6.6,5 L6.6,0 L3.4,0 L3.4,5 L0,5 Z" fill="#17a04f"/></svg><div class="a badge" style="left:1035px;top:62px">推广</div>
  <div class="a" style="left:1088px;top:64px;font-size:13px;line-height:16px;color:#333">超级推荐消耗</div><div class="a num" style="left:1088px;top:82px">2,789.95</div><div class="a s11 g" style="left:1088px;top:119px">较前1日</div><div class="a s11 g" style="left:1088px;top:134px">较上周同期</div><div class="a s11" style="left:1080px;width:128px;text-align:right;top:119px;color:#999">8.81%</div><svg class="a" style="left:1213px;top:121px" width="10" height="10"><path d="M5,10 L10,5 L6.6,5 L6.6,0 L3.4,0 L3.4,5 L0,5 Z" fill="#17a04f"/></svg><div class="a s11" style="left:1080px;width:128px;text-align:right;top:134px;color:#999">0.09%</div><svg class="a" style="left:1213px;top:136px" width="10" height="10"><path d="M5,10 L10,5 L6.6,5 L6.6,0 L3.4,0 L3.4,5 L0,5 Z" fill="#17a04f"/></svg><div class="a badge" style="left:1211px;top:62px">推广</div>
  <svg class="a" style="left:1266px;top:92px" width="8" height="14"><path d="M1.5,1.5 L6.5,7 L1.5,12.5" fill="none" stroke="#555" stroke-width="1.3"/></svg>
</div>
</body></html>
